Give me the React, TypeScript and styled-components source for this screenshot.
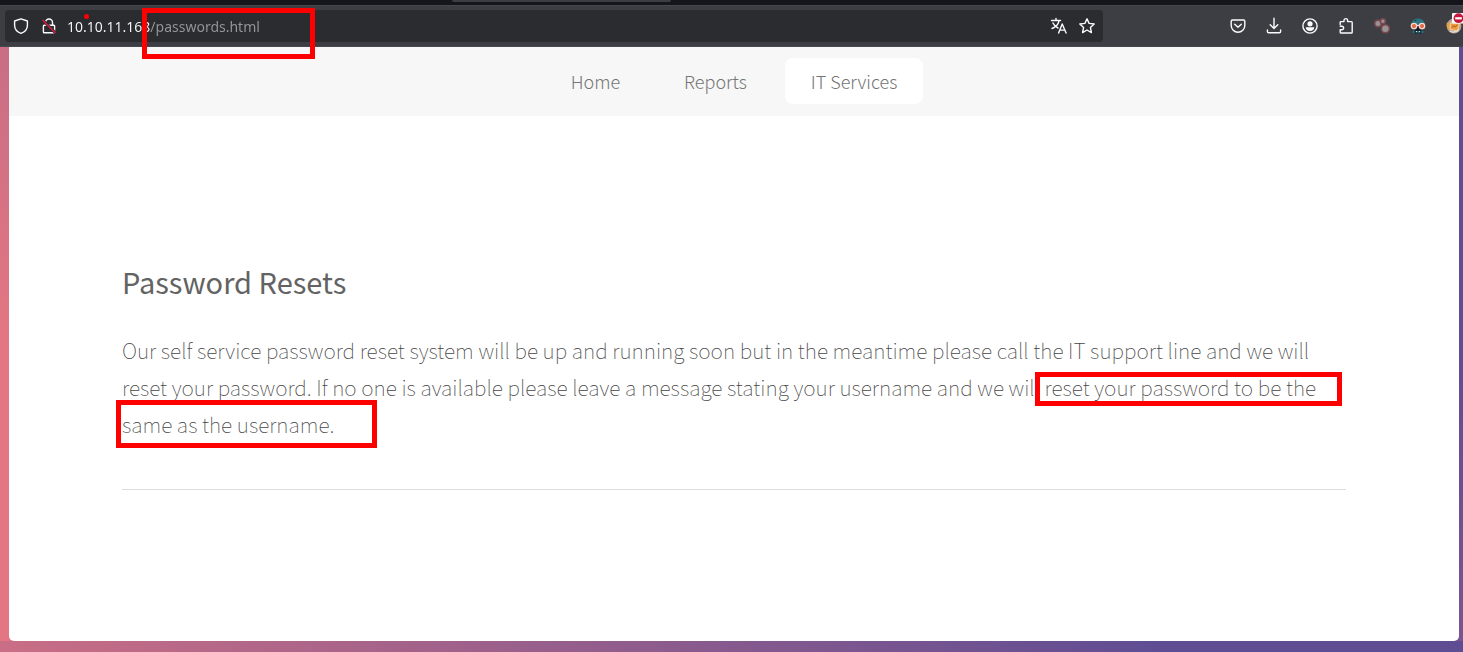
import React from "react";
import styled, { createGlobalStyle } from "styled-components";

const GlobalStyle = createGlobalStyle`
  *, *::before, *::after { box-sizing: border-box; }
  html, body { margin: 0; min-height: 100%; background: #5f4d93; }
  body { font-family: "Noto Sans CJK SC", "Open Sans", sans-serif; overflow-x: hidden; }
`;

const Page = styled.div`
  display: flex;
  flex-direction: column;
  min-height: 100vh;
`;

const TabStrip = styled.div`
  display: flex;
  height: 5px;
  padding-left: 452px;
  background: #15161c;
`;

const ActiveTab = styled.div`
  width: 219px;
  height: 2px;
  background: #3c3d42;
  border-radius: 0 0 4px 4px;
`;

const Toolbar = styled.div`
  display: flex;
  align-items: center;
  height: 42px;
  padding-left: 5px;
  background: #3d3e43;
  border-top: 1px solid #46474c;
  border-bottom: 1px solid #46474c;
`;

const AddressBar = styled.form`
  display: flex;
  align-items: center;
  flex: 1;
  height: 32px;
  padding: 0 2px;
  background: #2b2c30;
  border-radius: 4px;
`;

const IconButton = styled.button<{ $width?: number }>`
  display: flex;
  align-items: center;
  justify-content: center;
  width: ${(p) => p.$width ?? 28}px;
  height: 32px;
  padding: 0;
  border: 0;
  background: none;
  color: #fbfbfe;
  svg { display: block; overflow: visible; }
`;

const AddressField = styled.div`
  position: relative;
  display: flex;
  flex: 1;
  margin-left: 4px;
`;

const AddressInput = styled.input`
  width: 100%;
  height: 32px;
  padding: 0;
  border: 0;
  outline: 0;
  font: 400 14px "Noto Sans", "Open Sans", sans-serif;
  color: #97979b;
  background: linear-gradient(90deg, #fbfbfe 83px, #97979b 83px);
  background-clip: text;
  -webkit-background-clip: text;
  -webkit-text-fill-color: transparent;
`;

const Extensions = styled.div`
  display: flex;
  margin-left: 117px;
  margin-right: -9px;
`;

const Marker = styled.span<{ $top: number; $left: number; $width: number; $height: number }>`
  position: absolute;
  z-index: 2;
  top: ${(p) => p.$top}px;
  left: ${(p) => p.$left}px;
  width: ${(p) => p.$width}px;
  height: ${(p) => p.$height}px;
  border: 5px solid #ff0000;
  pointer-events: none;
`;

const MarkerDot = styled.span`
  position: absolute;
  top: 4px;
  left: 17px;
  width: 5px;
  height: 5px;
  border-radius: 50%;
  background: #ff0000;
`;

const Viewport = styled.div`
  flex: 1;
  padding: 0 4px 11px 9px;
  background: linear-gradient(45deg, #e37682 15%, #5f4d93 85%) 0 0 / 100% 594px;
`;

const Site = styled.div`
  background: #fff;
  border-radius: 0 0 5px 5px;
`;

const Nav = styled.nav`
  display: flex;
  justify-content: center;
  gap: 12px;
  padding: 11px 0 12px;
  background: #f7f7f7;
`;

const NavLink = styled.a<{ $active?: boolean }>`
  padding: 0 26px;
  border-radius: 8px;
  background: ${(p) => (p.$active ? "#fff" : "transparent")};
  color: #757575;
  font-size: 18px;
  font-weight: 300;
  line-height: 46px;
  text-decoration: none;
`;

const Main = styled.main`
  padding: 142px 113px 151px;
`;

const Title = styled.h1`
  margin: 0 0 28px;
  color: #636363;
  font-size: 29px;
  font-weight: 400;
  line-height: 46px;
`;

const Body = styled.p`
  margin: 0;
  color: #464646;
  font-size: 21px;
  font-weight: 100;
  line-height: 37px;
`;

const Marked = styled.span`
  position: relative;
  white-space: nowrap;
`;

const Rule = styled.hr`
  margin: 46px 0 0;
  border: 0;
  border-top: 1px solid #dddddd;
`;

const stroke = {
  fill: "none",
  stroke: "currentColor",
  strokeWidth: 1.4,
  strokeLinecap: "round" as const,
  strokeLinejoin: "round" as const,
};

const Icon = ({ children }: { children: React.ReactNode }) => (
  <svg width="16" height="16" viewBox="0 0 16 16" aria-hidden="true">{children}</svg>
);

const Shield = () => (
  <Icon><path {...stroke} d="M8 .8 14.4 3v4.2c0 3.6-2.4 6.6-6.4 8.1-4-1.5-6.4-4.5-6.4-8.1V3Z" /></Icon>
);
const InsecureLock = () => (
  <Icon>
    <path {...stroke} d="M4.5 7V4.5a3.5 3.5 0 0 1 7 0V7M3.2 7.2h9.6c.5 0 .8.3.8.8v6c0 .5-.3.8-.8.8H3.2a.8.8 0 0 1-.8-.8V8c0-.5.3-.8.8-.8Z" />
    <path d="m1.5 2 13 13" stroke="#2b2c30" strokeWidth="3" />
    <path d="m1.5 2 13 13" stroke="#e2173f" strokeWidth="1.3" />
  </Icon>
);
const Translate = () => (
  <Icon>
    <path {...stroke} d="M.5 2.5h9M5 .5v2M2 5c1 2.5 3 4 5 5M8 2.8C7.3 6.5 4.5 9 1 10.5M7.6 15l3.6-9 3.9 9M8.8 12.1h5.1" />
  </Icon>
);
const Star = () => (
  <Icon><path {...stroke} d="m8 .8 2.1 4.6 5.1.6-3.8 3.4 1 5.2L8 12l-4.4 2.6 1-5.2L.8 6l5.1-.6Z" /></Icon>
);
const Pocket = () => (
  <Icon>
    <path {...stroke} d="M2.4 2h11.2c.7 0 1.2.5 1.2 1.2v4.3a6.8 6.8 0 0 1-13.6 0V3.2C1.2 2.5 1.7 2 2.4 2Z" />
    <path {...stroke} d="m4.7 6.3 3.3 3 3.3-3" />
  </Icon>
);
const Download = () => (
  <Icon><path {...stroke} d="M8 .2v10M4.2 6.7 8 10.5l3.8-3.8M1.4 12v1.4c0 .8.5 1.3 1.3 1.3h10.6c.8 0 1.3-.5 1.3-1.3V12" /></Icon>
);
const Account = () => (
  <Icon>
    <circle {...stroke} cx="8" cy="8" r="7.1" />
    <circle cx="8" cy="5.8" r="2.6" fill="currentColor" />
    <path d="M3.7 9.3h8.6c0 2.2-1.8 3.7-4.3 3.7s-4.3-1.5-4.3-3.7Z" fill="currentColor" />
  </Icon>
);
const Puzzle = () => (
  <Icon><path {...stroke} d="M2.2 6.6V4.4c0-.5.3-.8.8-.8h3V2.4a1.8 1.8 0 0 1 3.6 0v1.2h3.8c.5 0 .8.3.8.8v9.8c0 .5-.3.8-.8.8H3a.8.8 0 0 1-.8-.8v-2.4h1.6a1.7 1.7 0 0 0 0-3.6H2.2" /></Icon>
);
const Cluster = () => (
  <Icon>
    <g fill="#999398" stroke="#79494d" strokeWidth="1.6">
      <circle cx="4" cy="5.5" r="3.3" />
      <circle cx="8.9" cy="3.2" r="2.5" />
      <circle cx="11.4" cy="10.8" r="4" />
    </g>
  </Icon>
);
const Masked = () => (
  <Icon>
    <path d="M1.3 7C1.2 3.2 4 .6 8 .6S14.8 3.2 14.7 7Z" fill="#2c7482" />
    <path d="m4.5 3 2-1" stroke="#173f4b" strokeWidth="1" />
    <path d="M2.5 8h11v7.3h-11Z" fill="#171a23" />
    <path d="M2.5 12.3h2v3h-2Zm9 0h2v3h-2Z" fill="#2c7482" />
    <path d="M5.5 13h5v1.7h-5Z" fill="#2c7482" />
    <path d="M6 13h1v1H6Zm3 0h1v1H9Z" fill="#dfd8ce" />
    <g fill="#e56745" stroke="#f4d9cf" strokeWidth="1.3">
      <circle cx="4" cy="8.1" r="2.7" />
      <circle cx="12" cy="8.1" r="2.7" />
    </g>
    <path d="M6.8 7.5h2.4" stroke="#f4d9cf" strokeWidth="1.3" />
  </Icon>
);
const Blocked = () => (
  <Icon>
    <circle cx="8" cy="8" r="7.4" fill="#b8a48e" />
    <path d="m.8 4.2 4 2.3-1.5 5.7L.6 8Z" fill="#e6a047" />
    <path d="m4.4 5 9 .3-1.7 7.5-7.5-1.2Z" fill="#f29a38" stroke="#f5dfbd" strokeWidth=".8" />
    <path d="m5.8 9.5 2-1.7 1.5 1 2-1.8" fill="none" stroke="#9b572a" strokeWidth="1" />
    <path d="M4 13.2c3 1.5 6.5.8 9-1.7" fill="none" stroke="#e5dfd8" strokeWidth="1.2" />
    <rect x="6" y="-5" width="14" height="10.5" rx="1" fill="#fff" />
    <circle cx="12.5" cy=".2" r="4.9" fill="#c5173b" />
    <path d="M9.2-.8h6.6v2.2H9.2Z" fill="#fff" />
  </Icon>
);

const extensions = [
  { label: "Save to Pocket", icon: <Pocket /> },
  { label: "Downloads", icon: <Download /> },
  { label: "Account", icon: <Account /> },
  { label: "Extensions", icon: <Puzzle /> },
  { label: "Cluster", icon: <Cluster /> },
  { label: "User agent", icon: <Masked /> },
  { label: "Proxy disabled", icon: <Blocked /> },
];

export default function App() {
  return (
    <Page>
      <GlobalStyle />
      <TabStrip><ActiveTab /></TabStrip>
      <Toolbar>
        <AddressBar onSubmit={(e) => e.preventDefault()}>
          <IconButton type="button" aria-label="Tracking protection"><Shield /></IconButton>
          <IconButton type="button" aria-label="Connection not secure"><InsecureLock /></IconButton>
          <AddressField>
            <AddressInput aria-label="Address" defaultValue="10.10.11.168/passwords.html" spellCheck={false} />
            <MarkerDot />
            <Marker $top={-2} $left={75} $width={173} $height={51} />
          </AddressField>
          <IconButton type="button" aria-label="Translate page"><Translate /></IconButton>
          <IconButton type="button" aria-label="Bookmark page"><Star /></IconButton>
        </AddressBar>
        <Extensions>
          {extensions.map((e) => (
            <IconButton key={e.label} type="button" aria-label={e.label} $width={36}>{e.icon}</IconButton>
          ))}
        </Extensions>
      </Toolbar>
      <Viewport>
        <Site>
          <Nav>
            <NavLink href="#home">Home</NavLink>
            <NavLink href="#reports">Reports</NavLink>
            <NavLink href="#services" $active>IT Services</NavLink>
          </Nav>
          <Main>
            <Title>Password Resets</Title>
            <Body>
              Our self service password reset system will be up and running soon but in the meantime please call the
              IT support line and we will
              <br />
              reset your password. If no one is available please leave a message stating your username and we will{" "}
              <Marked>
                reset your password to be the
                <Marker $top={0} $left={-10} $width={307} $height={34} />
              </Marked>
              <br />
              <Marked>
                same as the username.
                <Marker $top={-9} $left={-6} $width={261} $height={48} />
              </Marked>
            </Body>
            <Rule />
          </Main>
        </Site>
      </Viewport>
    </Page>
  );
}
